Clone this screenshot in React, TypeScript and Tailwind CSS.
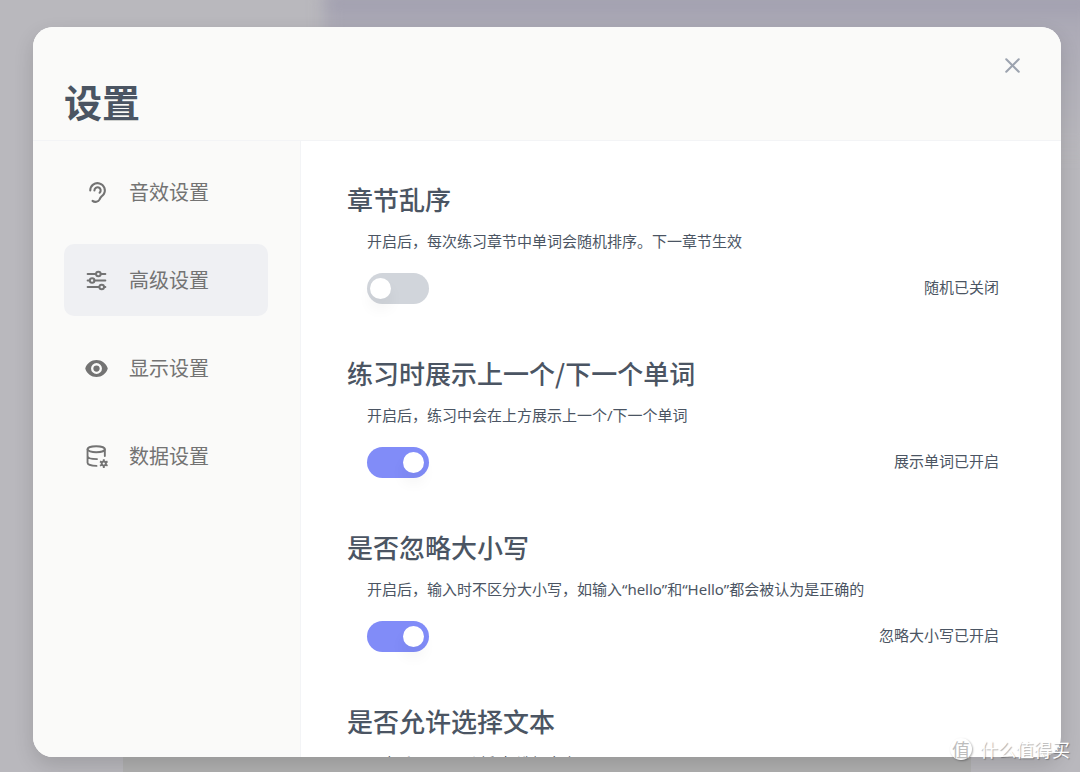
import { useState } from "react";
import type { ReactNode } from "react";
import { HiEye } from "react-icons/hi2";
import { TbEar, TbX } from "react-icons/tb";

function SlidersIcon() {
  return (
    <svg viewBox="0 0 24 24" className="size-[25px]" fill="none" stroke="currentColor" strokeWidth="1.9" strokeLinecap="round">
      <path d="M3.500 5.800h8M16 5.800h4.500M3.500 12h1.500M10 12h10.500M3.500 18.200h11M19.500 18.200h1" />
      <circle cx="13.800" cy="5.800" r="2.200" />
      <circle cx="7.800" cy="12" r="2.200" />
      <circle cx="17" cy="18.200" r="2.200" />
    </svg>
  );
}

function DatabaseCogIcon() {
  return (
    <svg viewBox="0 0 24 24" className="size-[25px]" fill="none" stroke="currentColor" strokeWidth="1.8" strokeLinecap="round">
      <ellipse cx="11.700" cy="5" rx="8.300" ry="2.900" />
      <path d="M3.400 5v13c0 1.700 3.400 3 8.600 3M20 5v6.500M3.400 11.500c0 1.700 3.400 3 9.100 3" />
      <circle cx="19" cy="18.800" r="2" />
      <path
        strokeLinecap="butt"
        d="M19 14.600v2.400M19 20.600v2.400M15.400 16.700l2 1.200M20.600 19.700l2 1.200M22.600 16.700l-2 1.200M17.400 19.700l-2 1.200"
      />
    </svg>
  );
}

const tabs: { label: string; icon: ReactNode }[] = [
  { label: "音效设置", icon: <TbEar className="size-[25px]" /> },
  { label: "高级设置", icon: <SlidersIcon /> },
  { label: "显示设置", icon: <HiEye className="size-[25px]" /> },
  { label: "数据设置", icon: <DatabaseCogIcon /> },
];

const options = [
  {
    title: "章节乱序",
    description: "开启后，每次练习章节中单词会随机排序。下一章节生效",
    name: "随机",
    enabled: false,
  },
  {
    title: "练习时展示上一个/下一个单词",
    description: "开启后，练习中会在上方展示上一个/下一个单词",
    name: "展示单词",
    enabled: true,
  },
  {
    title: "是否忽略大小写",
    description: "开启后，输入时不区分大小写，如输入“hello”和“Hello”都会被认为是正确的",
    name: "忽略大小写",
    enabled: true,
  },
  {
    title: "是否允许选择文本",
    description: "开启后，可以通过鼠标选择文本",
    name: "选择文本",
    enabled: false,
  },
];

type OptionProps = {
  title: string;
  description: string;
  name: string;
  enabled: boolean;
};

function Option({ title, description, name, enabled }: OptionProps) {
  const [checked, setChecked] = useState(enabled);

  return (
    <section className="flex shrink-0 flex-col text-[#4b5563]">
      <h2 className="text-[26px] font-medium leading-9">{title}</h2>
      <p className="mt-3 pl-5 font-['Noto_Sans','Noto_Sans_CJK_SC',sans-serif] text-[15px] leading-6">{description}</p>
      <div className="mt-5 flex items-start justify-between pl-5">
        <button
          type="button"
          role="switch"
          aria-checked={checked}
          aria-label={title}
          onClick={() => setChecked(!checked)}
          className={`flex h-[31px] w-[62px] items-center rounded-full px-[3px] ${
            checked ? "justify-end bg-[#818cf8] pr-[5px]" : "justify-start bg-[#d1d5db]"
          }`}
        >
          <span className="size-[21px] rounded-full bg-white shadow-[0_10px_15px_rgba(0,0,0,0.05)]" />
        </button>
        <span className="text-[15px] leading-7">
          {name}
          {checked ? "已开启" : "已关闭"}
        </span>
      </div>
    </section>
  );
}

function Watermark() {
  return (
    <div className="absolute bottom-[9px] right-[10px] flex items-center gap-2 text-white">
      <span className="flex size-[22px] items-center justify-center rounded-full bg-white text-lg leading-none text-[#bdbdbd] shadow-[1px_1px_2px_rgba(0,0,0,0.3)]">
        值
      </span>
      <span className="text-lg leading-7 [text-shadow:1px_1px_1px_rgba(0,0,0,0.3)]">什么值得买</span>
    </div>
  );
}

export default function App() {
  const [active, setActive] = useState(1);

  return (
    <div className="relative flex h-screen flex-col overflow-hidden bg-[#b9b8bd] font-['Noto_Sans_CJK_SC',sans-serif]">
      <div className="absolute -right-4 -top-2 left-[30%] h-40 bg-linear-to-b from-[#9d9bad] via-[#acaab6] via-20% to-[#b9b8bd] blur-sm" />
      <div className="absolute bottom-0 left-[123px] right-[109px] h-10 bg-[#b0b0b0]" />

      <main
        role="dialog"
        aria-labelledby="settings-title"
        className="relative mb-[15px] ml-[33px] mr-[19px] mt-[27px] flex min-h-0 flex-1 flex-col overflow-hidden rounded-[20px] bg-white shadow-[0_8px_20px_rgba(0,0,0,0.14)]"
      >
        <header className="flex h-[114px] shrink-0 items-end justify-between border-b border-[#f3f4f6] bg-[#fafaf9] pl-[31px] pr-9">
          <h1 id="settings-title" className="pb-[11px] text-[38px] font-bold leading-[56px] text-[#4b5563]">
            设置
          </h1>
          <button type="button" aria-label="关闭" className="mb-[62px] text-[#9ca3af]">
            <TbX className="size-[25px]" />
          </button>
        </header>

        <div className="flex min-h-0 flex-1">
          <nav className="flex w-[268px] shrink-0 flex-col gap-4 border-r border-[#f3f4f6] bg-[#fafaf9] pl-[31px] pr-8 pt-[15px]">
            {tabs.map((tab, index) => (
              <button
                key={tab.label}
                type="button"
                aria-current={active === index ? "page" : undefined}
                onClick={() => setActive(index)}
                className={`flex h-[72px] items-center gap-5 rounded-[10px] pl-5 text-xl text-[#737373] ${
                  active === index ? "bg-[#eff0f3]" : ""
                }`}
              >
                {tab.icon}
                <span>{tab.label}</span>
              </button>
            ))}
          </nav>

          <div className="flex min-w-0 flex-1 flex-col gap-[51px] overflow-hidden pl-[46px] pr-[62px] pt-10">
            {options.map((option) => (
              <Option key={option.title} {...option} />
            ))}
          </div>
        </div>
      </main>

      <Watermark />
    </div>
  );
}
